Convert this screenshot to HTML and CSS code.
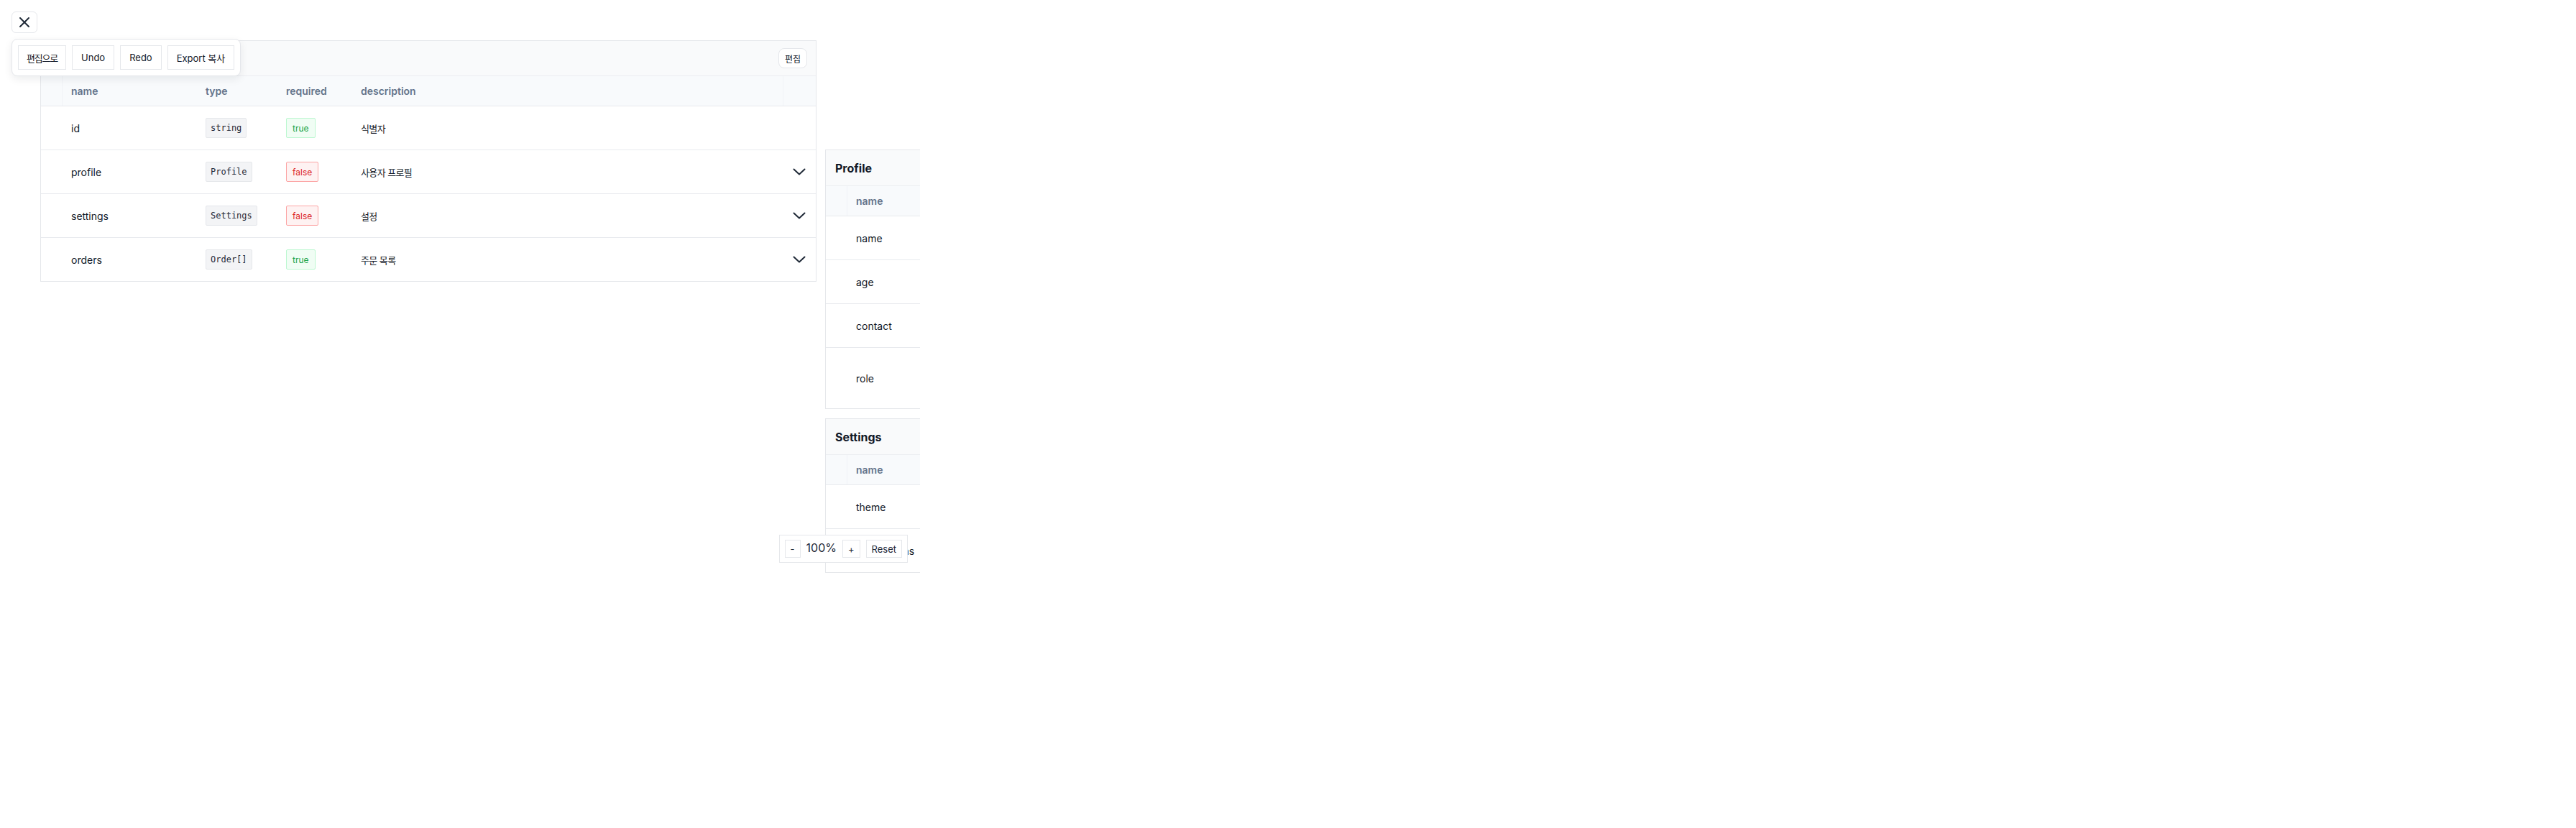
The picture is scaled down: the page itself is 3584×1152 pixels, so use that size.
FILE: index.html
```html
<!DOCTYPE html>
<html lang="ko">
<head>
<meta charset="utf-8">
<title>Schema</title>
<link rel="stylesheet" href="styles.css">
</head>
<body>
<div class="canvas">
  <div class="node node-main">
    <div class="node-head">
      <button class="edit-btn">편집</button>
    </div>
    <div class="tr th">
      <div class="td"></div><div class="td">name</div><div class="td">type</div><div class="td">required</div><div class="td">description</div><div class="td"></div>
    </div>
    <div class="tr">
      <div class="td"></div><div class="td">id</div><div class="td"><span class="chip-type">string</span></div><div class="td"><span class="chip chip-true">true</span></div><div class="td ko">식별자</div><div class="td"></div>
    </div>
    <div class="tr">
      <div class="td"></div><div class="td">profile</div><div class="td"><span class="chip-type">Profile</span></div><div class="td"><span class="chip chip-false">false</span></div><div class="td ko">사용자 프로필</div><div class="td td-exp"><svg class="chev" viewBox="0 0 18 10" width="18" height="10"><polyline points="1.5,1.5 9,8.5 16.5,1.5"/></svg></div>
    </div>
    <div class="tr">
      <div class="td"></div><div class="td">settings</div><div class="td"><span class="chip-type">Settings</span></div><div class="td"><span class="chip chip-false">false</span></div><div class="td ko">설정</div><div class="td td-exp"><svg class="chev" viewBox="0 0 18 10" width="18" height="10"><polyline points="1.5,1.5 9,8.5 16.5,1.5"/></svg></div>
    </div>
    <div class="tr">
      <div class="td"></div><div class="td">orders</div><div class="td"><span class="chip-type">Order[]</span></div><div class="td"><span class="chip chip-true">true</span></div><div class="td ko">주문 목록</div><div class="td td-exp"><svg class="chev" viewBox="0 0 18 10" width="18" height="10"><polyline points="1.5,1.5 9,8.5 16.5,1.5"/></svg></div>
    </div>
  </div>

  <div class="node node-sub node-profile">
    <div class="sub-head">Profile</div>
    <div class="tr th">
      <div class="td"></div><div class="td">name</div><div class="td">type</div><div class="td">required</div><div class="td">description</div><div class="td"></div>
    </div>
    <div class="tr">
      <div class="td"></div><div class="td">name</div><div class="td"><span class="chip-type">string</span></div><div class="td"><span class="chip chip-true">true</span></div><div class="td ko">이름</div><div class="td"></div>
    </div>
    <div class="tr">
      <div class="td"></div><div class="td">age</div><div class="td"><span class="chip-type">number</span></div><div class="td"><span class="chip chip-false">false</span></div><div class="td ko">나이</div><div class="td"></div>
    </div>
    <div class="tr">
      <div class="td"></div><div class="td">contact</div><div class="td"><span class="chip-type">Contact</span></div><div class="td"><span class="chip chip-false">false</span></div><div class="td ko">연락처</div><div class="td"></div>
    </div>
    <div class="tr tr-tall">
      <div class="td"></div><div class="td">role</div><div class="td"><span class="chip-type">Role</span></div><div class="td"><span class="chip chip-true">true</span></div><div class="td ko td-multi">역할<br>admin | user | guest</div><div class="td"></div>
    </div>
  </div>

  <div class="node node-sub node-settings">
    <div class="sub-head">Settings</div>
    <div class="tr th">
      <div class="td"></div><div class="td">name</div><div class="td">type</div><div class="td">required</div><div class="td">description</div><div class="td"></div>
    </div>
    <div class="tr">
      <div class="td"></div><div class="td">theme</div><div class="td"><span class="chip-type">string</span></div><div class="td"><span class="chip chip-false">false</span></div><div class="td ko">테마</div><div class="td"></div>
    </div>
    <div class="tr">
      <div class="td"></div><div class="td">notifications</div><div class="td"><span class="chip-type">boolean</span></div><div class="td"><span class="chip chip-false">false</span></div><div class="td ko">알림</div><div class="td"></div>
    </div>
  </div>

  <button class="close-btn" aria-label="닫기"><svg viewBox="0 0 16 16" width="16" height="16"><path d="M2 2L14 14M14 2L2 14"/></svg></button>

  <div class="toolbar">
    <button class="tb-btn tb-ko">편집으로</button>
    <button class="tb-btn">Undo</button>
    <button class="tb-btn">Redo</button>
    <button class="tb-btn">Export 복사</button>
  </div>

  <div class="zoom-ctl">
    <button class="z-btn">-</button>
    <span class="z-val">100%</span>
    <button class="z-btn">+</button>
    <button class="z-btn">Reset</button>
  </div>
</div>
</body>
</html>
```

FILE: styles.css
```css
* { box-sizing: border-box; }
html, body { margin: 0; padding: 0; background: #ffffff; }
body {
  font-family: Inter, "Noto Sans CJK KR", sans-serif;
  color: #111827;
  font-size: 14px;
}
button { font-family: inherit; cursor: pointer; }

.canvas {
  position: relative;
  width: 1280px;
  height: 800px;
  overflow: hidden;
  background: #ffffff;
}

.node {
  position: absolute;
  background: #ffffff;
  border: 1px solid #e5e7eb;
}
.node-main { left: 56px; top: 56px; width: 1080px; }
.node-sub { width: 760px; }
.node-profile { left: 1148px; top: 208px; }
.node-settings { left: 1148px; top: 582px; }

.node-head {
  height: 49px;
  display: flex;
  align-items: center;
  justify-content: flex-end;
  padding: 0 12px;
  background: #f9fafb;
  border-bottom: 1px solid #eceef1;
}
.edit-btn {
  height: 28px;
  padding: 0 8px;
  border: 1px solid #e5e7eb;
  border-radius: 8px;
  background: #ffffff;
  font-size: 12px;
  color: #111827;
}

.sub-head {
  height: 50px;
  display: flex;
  align-items: center;
  padding: 0 13px;
  background: #f9fafb;
  border-bottom: 1px solid #eceef1;
  font-weight: 700;
  font-size: 16px;
  color: #111827;
}

.tr {
  display: grid;
  grid-template-columns: 30px 187px 112px 104px 1fr 46px;
  height: 61px;
  border-top: 1px solid #e8eaee;
}
.tr.th {
  height: 41px;
  border-top: none;
  background: #f8fafc;
  color: #64748b;
  font-weight: 600;
  font-size: 14px;
}
.tr.th .td:first-child { border-right: 1px solid #f1f3f6; }
.tr.th .td:last-child { border-left: 1px solid #f1f3f6; }
.tr-tall { height: 85px; }
.td {
  display: flex;
  align-items: center;
  padding: 0 12px;
  white-space: nowrap;
  min-width: 0;
}
.td:first-child, .td:last-child { padding: 0; }
.td-exp { justify-content: center; }
.ko { font-size: 13px; letter-spacing: -0.6px; }
.td-multi { white-space: normal; line-height: 26px; }

.chip-type {
  display: inline-flex;
  align-items: center;
  height: 28px;
  padding: 0 6px;
  background: #f3f4f6;
  border: 1px solid #e5e7eb;
  border-radius: 2px;
  font-family: "DejaVu Sans Mono", "Liberation Mono", monospace;
  font-size: 12px;
  color: #1f2937;
}
.chip {
  display: inline-flex;
  align-items: center;
  height: 28px;
  padding: 0 8px;
  border: 1px solid;
  border-radius: 2px;
  font-size: 12px;
}
.chip-true { background: #f0fdf4; border-color: #bbf7d0; color: #16a34a; }
.chip-false { background: #fef2f2; border-color: #fca5a5; color: #dc2626; }

.chev { display: block; }
.chev polyline {
  fill: none;
  stroke: #1f2937;
  stroke-width: 2;
  stroke-linecap: round;
  stroke-linejoin: round;
}

.close-btn {
  position: absolute;
  left: 16px;
  top: 16px;
  width: 36px;
  height: 30px;
  padding: 0;
  display: flex;
  align-items: center;
  justify-content: center;
  background: #ffffff;
  border: 1px solid #e5e7eb;
  border-radius: 6px;
}
.close-btn svg path {
  fill: none;
  stroke: #1f2937;
  stroke-width: 2;
  stroke-linecap: round;
}

.toolbar {
  position: absolute;
  left: 16px;
  top: 54px;
  display: flex;
  gap: 8px;
  padding: 8px;
  background: #ffffff;
  border: 1px solid #e5e7eb;
  border-radius: 8px;
  box-shadow: 0 4px 12px rgba(15, 23, 42, 0.08);
}
.tb-btn {
  height: 34px;
  padding: 0 12px;
  background: #ffffff;
  border: 1px solid #e5e7eb;
  border-radius: 0;
  font-size: 13px;
  color: #111827;
}
.tb-ko { letter-spacing: -1.2px; padding: 0 11px; }

.zoom-ctl {
  position: absolute;
  right: 17px;
  bottom: 17px;
  display: flex;
  align-items: center;
  gap: 8px;
  padding: 6px 7px;
  background: #ffffff;
  border: 1px solid #e5e7eb;
}
.z-btn {
  height: 25px;
  padding: 0 7px;
  background: #ffffff;
  border: 1px solid #e5e7eb;
  border-radius: 0;
  font-size: 13px;
  color: #1f2937;
}
.z-val { font-size: 16px; color: #1f2937; margin-top: -3px; }
```
